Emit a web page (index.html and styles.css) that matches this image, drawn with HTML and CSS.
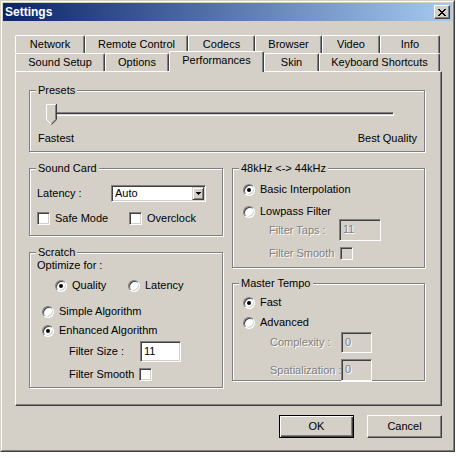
FILE: index.html
```html
<!DOCTYPE html>
<html>
<head>
<meta charset="utf-8">
<link rel="stylesheet" href="styles.css">
</head>
<body>
<div class="window">
  <div class="frame">
    <div class="titlebar">
      <span class="title">Settings</span>
      <span class="close"><svg width="8" height="7" viewBox="0 0 8 7"><path fill="#000" d="M0 0h2v1h-2z M6 0h2v1h-2z M1 1h2v1h-2z M5 1h2v1h-2z M2 2h4v1h-4z M3 3h2v1h-2z M2 4h4v1h-4z M1 5h2v1h-2z M5 5h2v1h-2z M0 6h2v1h-2z M6 6h2v1h-2z"/></svg></span>
    </div>
    <div class="content">
      <div class="tabs">
        <div class="tabrow">
          <div class="tab t-network">Network</div>
          <div class="tab t-remote">Remote Control</div>
          <div class="tab t-codecs">Codecs</div>
          <div class="tab t-browser">Browser</div>
          <div class="tab t-video">Video</div>
          <div class="tab t-info">Info</div>
        </div>
        <div class="tabrow">
          <div class="tab t-sound">Sound Setup</div>
          <div class="tab t-options">Options</div>
          <div class="tab t-perf active">Performances</div>
          <div class="tab t-skin">Skin</div>
          <div class="tab t-keys">Keyboard Shortcuts</div>
        </div>
      </div>
      <div class="panel">
        <fieldset class="group presets">
          <legend>Presets</legend>
          <div class="inner presets-inner">
            <div class="slider">
              <div class="track"></div>
              <svg class="thumb" width="11" height="21" viewBox="0 0 11 21">
                <polygon points="0,0 11,0 11,16 5.5,21 0,16" fill="#D4D0C8"/>
                <path d="M0.5 16 V0.5 H10" stroke="#fff" fill="none"/>
                <path d="M0.5 15.5 L5 20" stroke="#fff" fill="none"/>
                <path d="M10.5 0 V15.7 L5.5 20.7" stroke="#404040" fill="none"/>
                <path d="M9.5 1 V15.3 L5.5 19.3" stroke="#808080" fill="none"/>
              </svg>
            </div>
            <div class="slider-labels"><span>Fastest</span><span>Best Quality</span></div>
          </div>
        </fieldset>
        <div class="columns">
          <div class="col">
            <fieldset class="group soundcard">
              <legend>Sound Card</legend>
              <div class="inner sc-inner">
                <div class="latency-row">
                  <span class="lat-label">Latency :</span>
                  <div class="combo"><span class="combo-text">Auto</span><span class="combo-btn"><svg width="5" height="3" viewBox="0 0 5 3"><path d="M0 0h5v1h-5z M1 1h3v1h-3z M2 2h1v1h-1z" fill="#000"/></svg></span></div>
                </div>
                <div class="check-row">
                  <label class="item"><span class="check"></span>Safe Mode</label>
                  <label class="item"><span class="check"></span>Overclock</label>
                </div>
              </div>
            </fieldset>
            <fieldset class="group scratch">
              <legend>Scratch</legend>
              <div class="inner scratch-inner">
                <div class="line">Optimize for :</div>
                <div class="opt-row">
                  <label class="item quality"><span class="radio on"></span>Quality</label>
                  <label class="item"><span class="radio"></span>Latency</label>
                </div>
                <label class="item algo simple"><span class="radio"></span>Simple Algorithm</label>
                <label class="item algo enhanced"><span class="radio on"></span>Enhanced Algorithm</label>
                <div class="field-row fsize">
                  <span class="flabel w71">Filter Size :</span>
                  <span class="input w41">11</span>
                </div>
                <div class="field-row fsmooth">
                  <span class="flabel w70">Filter Smooth</span>
                  <span class="check"></span>
                </div>
              </div>
            </fieldset>
          </div>
          <div class="col">
            <fieldset class="group khz">
              <legend>48kHz &lt;-&gt; 44kHz</legend>
              <div class="inner khz-inner">
                <label class="item"><span class="radio on"></span>Basic Interpolation</label>
                <label class="item lowpass"><span class="radio"></span>Lowpass Filter</label>
                <div class="field-row taps">
                  <span class="flabel disabled w70">Filter Taps :</span>
                  <span class="input dis w42 h22">11</span>
                </div>
                <div class="field-row ksmooth">
                  <span class="flabel disabled w71">Filter Smooth</span>
                  <span class="check dis"></span>
                </div>
              </div>
            </fieldset>
            <fieldset class="group tempo">
              <legend>Master Tempo</legend>
              <div class="inner tempo-inner">
                <label class="item"><span class="radio on"></span>Fast</label>
                <label class="item advanced"><span class="radio"></span>Advanced</label>
                <div class="field-row complexity">
                  <span class="flabel disabled w71">Complexity :</span>
                  <span class="input dis w31">0</span>
                </div>
                <div class="field-row spatial">
                  <span class="flabel disabled w71">Spatialization :</span>
                  <span class="input dis w31 h22">0</span>
                </div>
              </div>
            </fieldset>
          </div>
        </div>
      </div>
      <div class="buttons">
        <button class="btn default">OK</button>
        <button class="btn">Cancel</button>
      </div>
    </div>
  </div>
</div>
</body>
</html>
```
FILE: styles.css
```css
* { box-sizing: border-box; }
body {
  margin: 0;
  background: #fff;
  font-family: "Liberation Sans", Arial, sans-serif;
  font-size: 11px;
  line-height: 13px;
  color: #000;
}
.window {
  width: 455px;
  height: 452px;
  background: #D4D0C8;
  border: 1px solid;
  border-color: #D4D0C8 #404040 #404040 #D4D0C8;
}
.frame {
  height: 100%;
  border: 1px solid;
  border-color: #fff #808080 #808080 #fff;
  padding: 1px;
  display: flex;
  flex-direction: column;
}
.titlebar {
  height: 18px;
  flex: none;
  background: linear-gradient(to right, #0A246A, #A6CAF0);
  display: flex;
  align-items: center;
  justify-content: space-between;
  padding: 0 2px 0 2px;
}
.title {
  color: #fff;
  font-weight: bold;
  font-size: 12px;
  padding-left: 0;
}
.close {
  width: 16px;
  height: 14px;
  background: #D4D0C8;
  border: 1px solid;
  border-color: #fff #404040 #404040 #fff;
  box-shadow: inset -1px -1px 0 #808080;
  display: flex;
  align-items: center;
  justify-content: center;
}
.close svg { display: block; margin-left: -1px; }
.content {
  padding: 14px 10px 0 12px;
}
.tabs { display: flex; flex-direction: column; }
.tabrow { display: flex; height: 18px; align-items: flex-start; }
.tab {
  height: 18px;
  background: #D4D0C8;
  border-top: 1px solid #fff;
  border-left: 1px solid #fff;
  border-right: 1px solid #404040;
  box-shadow: inset -1px 0 0 #808080;
  border-top-left-radius: 2px;
  border-top-right-radius: 2px;
  display: flex;
  align-items: center;
  justify-content: center;
  white-space: nowrap;
}
.tab.active {
  height: 21px;
  margin-top: -2px;
  position: relative;
  z-index: 1;
  align-items: flex-start;
  padding-top: 2px;
}
.t-network { width: 70px; }
.t-remote { width: 103px; }
.t-codecs { width: 67px; }
.t-browser { width: 67px; }
.t-video { width: 58px; }
.t-info { width: 60px; }
.t-sound { width: 90px; }
.t-options { width: 64px; }
.t-perf { width: 95px; }
.t-skin { width: 55px; }
.t-keys { width: 121px; }

.panel {
  width: 427px;
  height: 335px;
  border: 1px solid;
  border-color: #fff #404040 #404040 #fff;
  box-shadow: inset -1px -1px 0 #808080;
  padding: 12px 16px 0 13px;
}
.group {
  margin: 0;
  padding: 0;
  min-width: 0;
  border: 1px solid #808080;
  box-shadow: 1px 1px 0 #fff, inset 1px 1px 0 #fff;
}
.group legend {
  margin-left: 6px;
  padding: 0 2px;
  line-height: 13px;
  height: 13px;
  background: #D4D0C8;
}
.presets { height: 68px; }
.presets-inner { padding: 7px 7px 0 8px; }
.slider {
  position: relative;
  height: 22px;
  margin: 0 23px 0 12px;
}
.track {
  position: absolute;
  left: 0;
  right: 0;
  top: 8px;
  height: 4px;
  border: 1px solid;
  border-color: #808080 #fff #fff #808080;
  box-shadow: inset 1px 1px 0 #404040;
}
.thumb { position: absolute; left: -4px; top: 0; display: block; }
.slider-labels {
  display: flex;
  justify-content: space-between;
  margin-top: 6px;
}
.columns {
  display: grid;
  grid-template-columns: 194px 193px;
  column-gap: 9px;
  margin-top: 10px;
}
.col { display: flex; flex-direction: column; }
.soundcard { height: 74px; }
.scratch { height: 142px; margin-top: 10px; }
.khz { height: 106px; }
.tempo { height: 104px; margin-top: 9px; }

.sc-inner { padding: 10px 0 0 7px; }
.latency-row { display: flex; align-items: center; height: 17px; }
.lat-label { width: 74px; }
.combo {
  width: 95px;
  height: 17px;
  background: #fff;
  border: 1px solid;
  border-color: #808080 #fff #fff #808080;
  box-shadow: inset 1px 1px 0 #404040, inset -1px -1px 0 #D4D0C8;
  padding: 1px;
  display: flex;
  justify-content: space-between;
}
.combo-text { padding-left: 2px; line-height: 13px; }
.combo-btn {
  width: 12px;
  height: 13px;
  background: #D4D0C8;
  border: 1px solid;
  border-color: #D4D0C8 #404040 #404040 #D4D0C8;
  box-shadow: inset 1px 1px 0 #fff, inset -1px -1px 0 #808080;
  display: flex;
  align-items: center;
  justify-content: center;
}
.combo-btn svg { display: block; }
.check-row {
  display: grid;
  grid-template-columns: 92px auto;
  margin-top: 10px;
}
.item {
  display: flex;
  align-items: center;
  gap: 5px;
  height: 13px;
  white-space: nowrap;
}
.check {
  width: 13px;
  height: 13px;
  flex: none;
  background: #fff;
  border: 1px solid;
  border-color: #808080 #fff #fff #808080;
  box-shadow: inset 1px 1px 0 #404040, inset -1px -1px 0 #D4D0C8;
}
.check.dis { background: #D4D0C8; }
.radio {
  width: 12px;
  height: 12px;
  flex: none;
  border-radius: 50%;
  background: #fff;
  border: 1px solid;
  border-color: #808080 #fff #fff #808080;
  box-shadow: inset 1px 1px 0 #404040, inset -1px -1px 0 #D4D0C8;
  position: relative;
}
.radio.on::after {
  content: "";
  position: absolute;
  left: 3px;
  top: 3px;
  width: 4px;
  height: 4px;
  border-radius: 50%;
  background: #000;
}

.scratch-inner { padding: 0 0 0 7px; }
.opt-row {
  display: grid;
  grid-template-columns: 73px auto;
  margin: 7px 0 0 18px;
}
.algo { margin-left: 5px; }
.simple { margin-top: 13px; }
.enhanced { margin-top: 6px; }
.field-row { display: flex; align-items: center; }
.fsize { margin: 4px 0 0 32px; }
.fsmooth { margin: 6px 0 0 32px; }
.flabel { white-space: nowrap; }
.flabel.disabled { color: #808080; text-shadow: 1px 1px 0 #fff; }
.w70 { width: 70px; }
.w71 { width: 71px; }
.w41 { width: 41px; }
.w42 { width: 42px; }
.w31 { width: 31px; }
.input {
  height: 21px;
  background: #fff;
  border: 1px solid;
  border-color: #808080 #fff #fff #808080;
  box-shadow: inset 1px 1px 0 #404040, inset -1px -1px 0 #D4D0C8;
  padding: 3px 0 0 3px;
  line-height: 13px;
}
.input.h22 { height: 22px; }
.input.dis { background: #D4D0C8; color: #808080; text-shadow: 1px 1px 0 #fff; }

.khz-inner { padding: 8px 0 0 10px; }
.lowpass { margin-top: 9px; }
.taps { margin: 1px 0 0 26px; }
.ksmooth { margin: 6px 0 0 26px; }

.tempo-inner { padding: 6px 0 0 10px; }
.advanced { margin-top: 7px; }
.complexity { margin: 3px 0 0 27px; }
.spatial { margin: 6px 0 0 27px; }

.buttons {
  display: flex;
  justify-content: flex-end;
  gap: 13px;
  margin-top: 9px;
}
.btn {
  width: 75px;
  height: 23px;
  margin: 0;
  padding: 0;
  font: inherit;
  color: #000;
  background: #D4D0C8;
  border: 1px solid;
  border-color: #fff #404040 #404040 #fff;
  box-shadow: inset -1px -1px 0 #808080, inset 1px 1px 0 #D4D0C8;
}
.btn.default {
  border-color: #000;
  box-shadow: inset 1px 1px 0 #fff, inset -1px -1px 0 #404040, inset -2px -2px 0 #808080;
}
```
